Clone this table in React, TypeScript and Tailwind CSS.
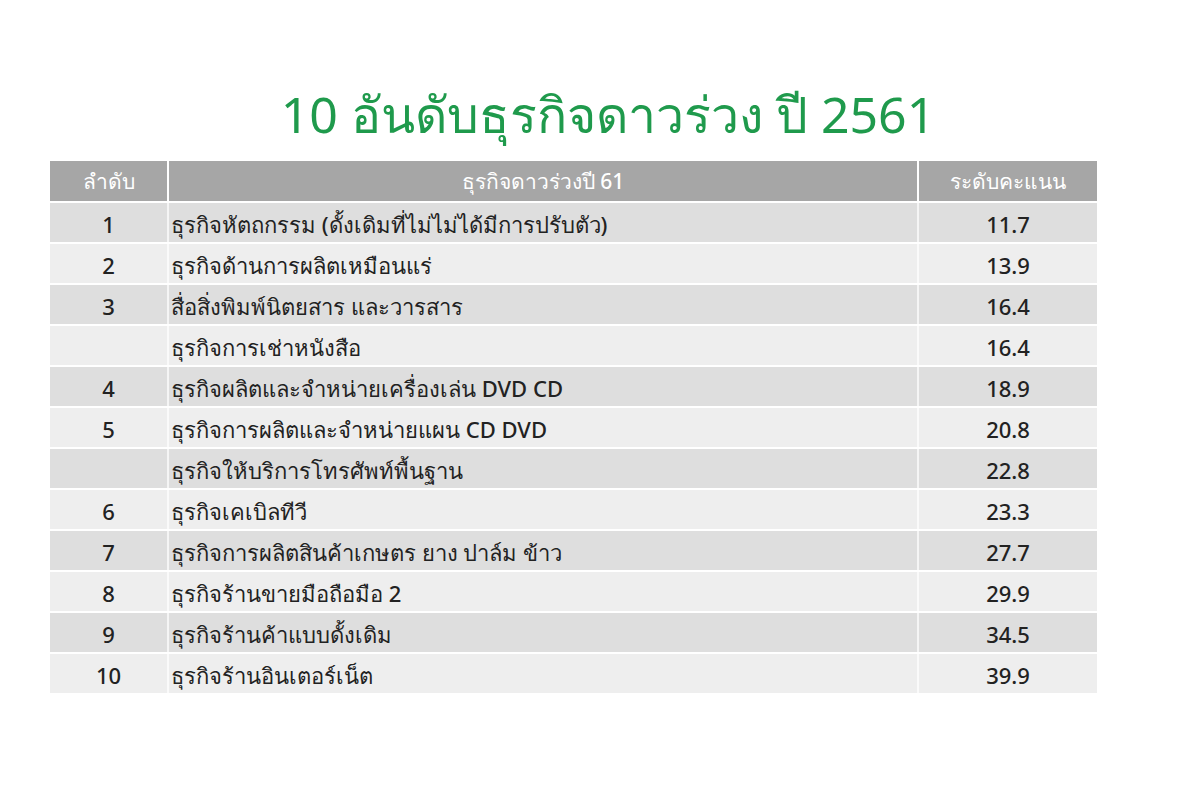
import React from "react";

type Row = { rank: string; name: string; score: string };

const rows: Row[] = [
  { rank: "1", name: "ธุรกิจหัตถกรรม (ดั้งเดิมที่ไม่ไม่ได้มีการปรับตัว)", score: "11.7" },
  { rank: "2", name: "ธุรกิจด้านการผลิตเหมือนแร่", score: "13.9" },
  { rank: "3", name: "สื่อสิ่งพิมพ์นิตยสาร และวารสาร", score: "16.4" },
  { rank: "", name: "ธุรกิจการเช่าหนังสือ", score: "16.4" },
  { rank: "4", name: "ธุรกิจผลิตและจำหน่ายเครื่องเล่น DVD CD", score: "18.9" },
  { rank: "5", name: "ธุรกิจการผลิตและจำหน่ายแผน CD DVD", score: "20.8" },
  { rank: "", name: "ธุรกิจให้บริการโทรศัพท์พื้นฐาน", score: "22.8" },
  { rank: "6", name: "ธุรกิจเคเบิลทีวี", score: "23.3" },
  { rank: "7", name: "ธุรกิจการผลิตสินค้าเกษตร ยาง ปาล์ม ข้าว", score: "27.7" },
  { rank: "8", name: "ธุรกิจร้านขายมือถือมือ 2", score: "29.9" },
  { rank: "9", name: "ธุรกิจร้านค้าแบบดั้งเดิม", score: "34.5" },
  { rank: "10", name: "ธุรกิจร้านอินเตอร์เน็ต", score: "39.9" },
];

export default function App() {
  return (
    <div className="w-[1200px] h-[799px] bg-white pt-[78px] font-['Noto_Sans',sans-serif]">
      <h1 className="text-center text-[50px] leading-[72px] text-[#1f9a4c] pl-[16px]">
        10 อันดับธุรกิจดาวร่วง ปี 2561
      </h1>

      <div className="ml-[50px] mt-[11px] w-[1047px] flex flex-col gap-[2px]">
        <div className="flex gap-[2px] h-[40px] text-white text-[21px] font-medium">
          <div className="w-[117px] bg-[#a6a6a6] flex items-center justify-center pt-[2px]">ลำดับ</div>
          <div className="flex-1 bg-[#a6a6a6] flex items-center justify-center pt-[2px]">ธุรกิจดาวร่วงปี 61</div>
          <div className="w-[178px] bg-[#a6a6a6] flex items-center justify-center pt-[2px]">ระดับคะแนน</div>
        </div>

        {rows.map((r, i) => (
          <div
            key={i}
            className={
              "flex gap-[2px] h-[39px] text-[22px] font-medium text-[#222222] " +
              (i % 2 === 0 ? "bg-[#dedede]" : "bg-[#eeeeee]")
            }
          >
            <div className="w-[117px] flex items-center justify-center pt-[4px]">{r.rank}</div>
            <div className="w-[2px] -mx-[2px] bg-white/70" />
            <div className="flex-1 flex items-center pl-[2px] pt-[4px]">{r.name}</div>
            <div className="w-[2px] -mx-[2px] bg-white/70" />
            <div className="w-[178px] flex items-center justify-center pt-[4px]">{r.score}</div>
          </div>
        ))}
      </div>
    </div>
  );
}
